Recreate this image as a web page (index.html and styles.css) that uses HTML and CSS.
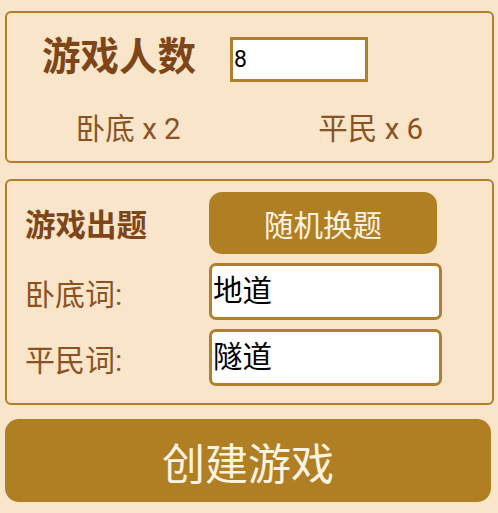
FILE: index.html
```html
<!DOCTYPE html>
<html lang="zh">
<head>
<meta charset="utf-8">
<link rel="stylesheet" href="styles.css">
</head>
<body>
<div class="page">
  <section class="panel count-panel">
    <div class="count-row">
      <div class="title">游戏人数</div>
      <div class="num-input">8</div>
    </div>
    <div class="roles">
      <div class="role">卧底 x 2</div>
      <div class="role">平民 x 6</div>
    </div>
  </section>
  <section class="panel word-panel">
    <div class="word-row">
      <div class="subtitle">游戏出题</div>
      <div class="btn-random">随机换题</div>
    </div>
    <div class="word-row">
      <div class="label">卧底词:</div>
      <div class="text-input">地道</div>
    </div>
    <div class="word-row">
      <div class="label">平民词:</div>
      <div class="text-input">隧道</div>
    </div>
  </section>
  <div class="btn-create">创建游戏</div>
</div>
</body>
</html>
```
FILE: styles.css
```css
html, body {
  margin: 0;
  padding: 0;
  background: #f8e5ca;
}
body {
  font-family: Roboto, "Noto Sans CJK SC", sans-serif;
  width: 498px;
  height: 513px;
  overflow: hidden;
}
.page {
  padding: 11px 4px 0 5px;
  display: flex;
  flex-direction: column;
}
.panel {
  border: 2.5px solid #b07f2c;
  border-radius: 6px;
  box-sizing: border-box;
}
.count-panel {
  height: 152px;
  display: flex;
  flex-direction: column;
}
.count-row {
  display: flex;
  align-items: center;
  padding: 24px 0 0 35px;
  gap: 34px;
}
.title {
  font-size: 38.5px;
  font-weight: 700;
  color: #7e4518;
  line-height: 44px;
  position: relative;
  top: -3px;
}
.num-input {
  width: 138px;
  height: 45px;
  box-sizing: border-box;
  border: 3px solid #b07f2c;
  background: #fff;
  font-size: 23px;
  line-height: 40px;
  padding-left: 1px;
  color: #000;
}
.roles {
  display: flex;
  margin-top: 27px;
}
.role {
  flex: 1;
  text-align: center;
  font-size: 29.5px;
  color: #8a5325;
  line-height: 40px;
}
.word-panel {
  margin-top: 16px;
  height: 226px;
  padding: 11px 50px 0 18px;
  display: flex;
  flex-direction: column;
  gap: 9px;
}
.word-row {
  display: flex;
  align-items: center;
  gap: 0;
}
.subtitle, .label {
  width: 184px;
  flex: none;
}
.subtitle {
  font-size: 30.5px;
  font-weight: 700;
  color: #7e4518;
}
.label {
  font-size: 30px;
  color: #8a5325;
}
.btn-random {
  width: 228px;
  height: 62px;
  border-radius: 13px;
  background: #b07f24;
  color: #fdf3e2;
  font-size: 29.5px;
  display: flex;
  align-items: center;
  justify-content: center;
}
.text-input {
  width: 233px;
  height: 57px;
  box-sizing: border-box;
  border: 3px solid #b07f2c;
  border-radius: 7px;
  background: #fff;
  font-size: 29.5px;
  color: #000;
  line-height: 50px;
  padding-left: 1px;
}
.btn-create {
  margin-top: 14px;
  width: 486px;
  height: 83px;
  border-radius: 14px;
  background: #b07f24;
  color: #fdf3e2;
  font-size: 43px;
  display: flex;
  align-items: center;
  justify-content: center;
}
```
